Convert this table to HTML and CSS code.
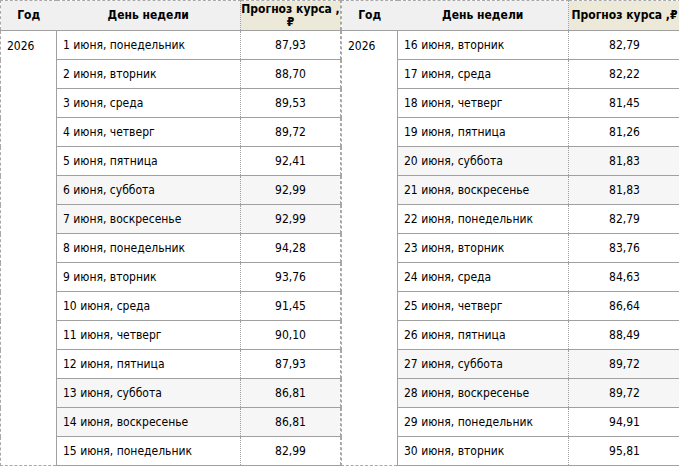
FILE: index.html
```html
<!DOCTYPE html>
<html lang="ru">
<head>
<meta charset="utf-8">
<link rel="stylesheet" href="styles.css">
</head>
<body>
<div class="page">
  <table class="rates rates-left">
    <colgroup><col class="c-year"><col class="c-day"><col class="c-val"></colgroup>
    <thead>
      <tr><th class="h-year">Год</th><th class="h-day">День недели</th><th class="h-val"><span class="nowrap">Прогноз курса ,</span> ₽</th></tr>
    </thead>
    <tbody>
      <tr><td class="year" rowspan="15">2026</td><td class="day">1 июня, понедельник</td><td class="val">87,93</td></tr>
      <tr><td class="day">2 июня, вторник</td><td class="val">88,70</td></tr>
      <tr><td class="day">3 июня, среда</td><td class="val">89,53</td></tr>
      <tr><td class="day">4 июня, четверг</td><td class="val">89,72</td></tr>
      <tr><td class="day">5 июня, пятница</td><td class="val">92,41</td></tr>
      <tr class="we"><td class="day">6 июня, суббота</td><td class="val">92,99</td></tr>
      <tr class="we"><td class="day">7 июня, воскресенье</td><td class="val">92,99</td></tr>
      <tr><td class="day">8 июня, понедельник</td><td class="val">94,28</td></tr>
      <tr><td class="day">9 июня, вторник</td><td class="val">93,76</td></tr>
      <tr><td class="day">10 июня, среда</td><td class="val">91,45</td></tr>
      <tr><td class="day">11 июня, четверг</td><td class="val">90,10</td></tr>
      <tr><td class="day">12 июня, пятница</td><td class="val">87,93</td></tr>
      <tr class="we"><td class="day">13 июня, суббота</td><td class="val">86,81</td></tr>
      <tr class="we"><td class="day">14 июня, воскресенье</td><td class="val">86,81</td></tr>
      <tr><td class="day">15 июня, понедельник</td><td class="val">82,99</td></tr>
    </tbody>
  </table>
  <table class="rates rates-right">
    <colgroup><col class="c-year"><col class="c-day"><col class="c-val"></colgroup>
    <thead>
      <tr><th class="h-year">Год</th><th class="h-day">День недели</th><th class="h-val"><span class="nowrap">Прогноз курса ,₽</span></th></tr>
    </thead>
    <tbody>
      <tr><td class="year" rowspan="15">2026</td><td class="day">16 июня, вторник</td><td class="val">82,79</td></tr>
      <tr><td class="day">17 июня, среда</td><td class="val">82,22</td></tr>
      <tr><td class="day">18 июня, четверг</td><td class="val">81,45</td></tr>
      <tr><td class="day">19 июня, пятница</td><td class="val">81,26</td></tr>
      <tr class="we"><td class="day">20 июня, суббота</td><td class="val">81,83</td></tr>
      <tr class="we"><td class="day">21 июня, воскресенье</td><td class="val">81,83</td></tr>
      <tr><td class="day">22 июня, понедельник</td><td class="val">82,79</td></tr>
      <tr><td class="day">23 июня, вторник</td><td class="val">83,76</td></tr>
      <tr><td class="day">24 июня, среда</td><td class="val">84,63</td></tr>
      <tr><td class="day">25 июня, четверг</td><td class="val">86,64</td></tr>
      <tr><td class="day">26 июня, пятница</td><td class="val">88,49</td></tr>
      <tr class="we"><td class="day">27 июня, суббота</td><td class="val">89,72</td></tr>
      <tr class="we"><td class="day">28 июня, воскресенье</td><td class="val">89,72</td></tr>
      <tr><td class="day">29 июня, понедельник</td><td class="val">94,91</td></tr>
      <tr><td class="day">30 июня, вторник</td><td class="val">95,81</td></tr>
    </tbody>
  </table>
</div>
</body>
</html>
```

FILE: styles.css
```css
html, body {
  margin: 0;
  padding: 0;
  background: #ffffff;
}
body {
  font-family: "DejaVu Sans Condensed", "DejaVu Sans", sans-serif;
  font-stretch: condensed;
  font-size: 12px;
  color: #000;
}
.page {
  display: flex;
  width: 679px;
}
.rates {
  border-collapse: collapse;
  table-layout: fixed;
}
.rates-left { width: 340px; }
.rates-right { width: 339px; }
.rates-left .c-year { width: 56px; }
.rates-left .c-day { width: 184px; }
.rates-left .c-val { width: 100px; }
.rates-right .c-year { width: 56px; }
.rates-right .c-day { width: 171px; }
.rates-right .c-val { width: 112px; }

.rates th {
  height: 29px;
  padding: 0 2px;
  font-weight: bold;
  text-align: center;
  vertical-align: middle;
  line-height: 13px;
  background: #f0f0f0;
  border-top: 1px dashed #a8a8a8;
  border-bottom: 1px solid #a0a0a0;
}
.rates th.h-val {
  padding: 0;
  background: #ece9d8;
  border-left: 1px dotted #a0a0a0;
  border-right: 1px dashed #a8a8a8;
}
.nowrap {
  white-space: nowrap;
}
.rates th.h-year {
  border-left: 1px dashed #a8a8a8;
}
.rates td {
  height: 28px;
  padding: 0 6px;
  vertical-align: middle;
  border-bottom: 1px solid #a0a0a0;
}
.rates td.year {
  vertical-align: top;
  padding-top: 8px;
  background: #fff;
  border-left: 1px dashed #a8a8a8;
  border-right: 1px solid #a0a0a0;
  border-bottom: 1px dashed #a8a8a8;
}
.rates td.val {
  text-align: center;
  border-left: 1px dotted #a0a0a0;
  border-right: 1px dashed #a8a8a8;
}
.rates tr.we td.day,
.rates tr.we td.val {
  background: #f6f6f6;
}
```
